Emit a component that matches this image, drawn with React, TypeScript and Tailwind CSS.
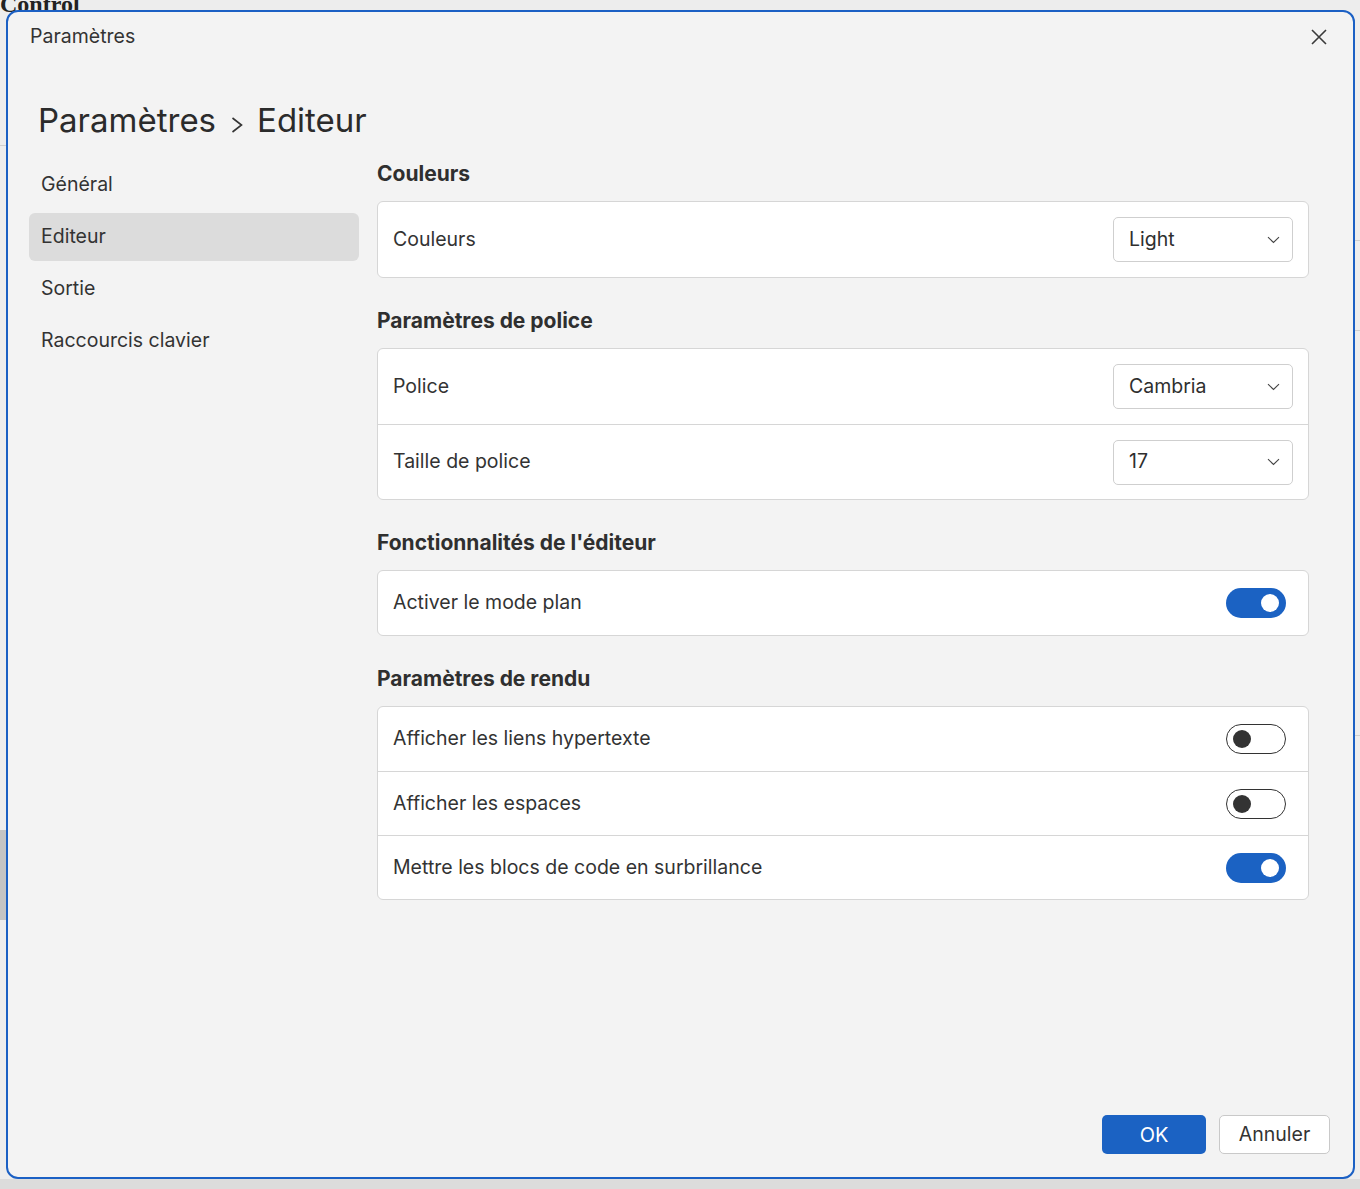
import React, { useState } from "react";

type Row =
  | { kind: "select"; label: string; value: string }
  | { kind: "toggle"; label: string; on: boolean };

interface Section {
  title: string;
  rows: Row[];
}

const sections: Section[] = [
  { title: "Couleurs", rows: [{ kind: "select", label: "Couleurs", value: "Light" }] },
  {
    title: "Paramètres de police",
    rows: [
      { kind: "select", label: "Police", value: "Cambria" },
      { kind: "select", label: "Taille de police", value: "17" },
    ],
  },
  {
    title: "Fonctionnalités de l'éditeur",
    rows: [{ kind: "toggle", label: "Activer le mode plan", on: true }],
  },
  {
    title: "Paramètres de rendu",
    rows: [
      { kind: "toggle", label: "Afficher les liens hypertexte", on: false },
      { kind: "toggle", label: "Afficher les espaces", on: false },
      { kind: "toggle", label: "Mettre les blocs de code en surbrillance", on: true },
    ],
  },
];

const navItems = ["Général", "Editeur", "Sortie", "Raccourcis clavier"];

const Chevron = () => (
  <svg width="13" height="8" viewBox="0 0 13 8" fill="none">
    <path d="M1 1.2l5.5 5.3L12 1.2" stroke="#444" strokeWidth="1.1" />
  </svg>
);

const SelectBox: React.FC<{ value: string }> = ({ value }) => (
  <div className="flex h-[45px] w-[180px] items-center justify-between rounded-[5px] border border-[#cfcfcf] bg-white pl-[15px] pr-[12px] text-[19.5px] text-[#2f2f2f]">
    <span>{value}</span>
    <Chevron />
  </div>
);

const Toggle: React.FC<{ on: boolean }> = ({ on }) =>
  on ? (
    <div className="flex h-[30px] w-[60px] items-center justify-end rounded-full bg-[#1b62c3] pr-[7px]">
      <div className="h-[18px] w-[18px] rounded-full bg-white" />
    </div>
  ) : (
    <div className="flex h-[30px] w-[60px] items-center rounded-full border border-[#333] bg-white pl-[6px]">
      <div className="h-[18px] w-[18px] rounded-full bg-[#333]" />
    </div>
  );

export default function App() {
  const [active, setActive] = useState(1);

  return (
    <div
      className="relative h-[1189px] w-[1360px] overflow-hidden bg-[#ededed] text-[#2f2f2f]"
      style={{ fontFamily: "Inter, 'Noto Sans', sans-serif" }}
    >
      {/* app behind the dialog */}
      <div
        className="absolute left-0 top-[-10px] text-[24px] font-bold leading-[28px] text-[#222]"
        style={{ fontFamily: "'Liberation Serif', serif" }}
      >
        Control
      </div>
      <div className="absolute left-0 top-[145px] h-px w-[6px] bg-[#cfcfcf]" />
      <div className="absolute left-0 top-[830px] h-[90px] w-[6px] bg-[#c4c4c4]" />
      <div className="absolute right-0 top-[240px] h-px w-[6px] bg-[#cfcfcf]" />
      <div className="absolute right-0 top-[330px] h-px w-[6px] bg-[#cfcfcf]" />
      <div className="absolute right-0 top-[735px] h-px w-[6px] bg-[#cfcfcf]" />
      <div className="absolute left-0 bottom-0 h-[10px] w-full bg-[#dcdcdc]" />

      {/* dialog */}
      <div className="absolute left-[6px] top-[10px] flex h-[1169px] w-[1349px] flex-col rounded-[12px] border-2 border-[#1b60c4] bg-[#f3f3f3]">
        <div className="flex h-[50px] items-center justify-between pl-[22px] pr-[26px]">
          <span className="text-[19.5px] text-[#333]">Paramètres</span>
          <svg width="16" height="16" viewBox="0 0 16 16" fill="none">
            <path d="M1 1l14 14M15 1L1 15" stroke="#3a3a3a" strokeWidth="1.6" />
          </svg>
        </div>

        <div className="mt-[38px] flex h-[40px] items-center pl-[30px] text-[33px] leading-[40px] text-[#2b2b2b]">
          <span>Paramètres</span>
          <svg className="ml-[15px] mr-[14px] mt-[10px]" width="12" height="16" viewBox="0 0 12 16" fill="none">
            <path d="M1.5 1l9 7-9 7" stroke="#333" strokeWidth="1.6" />
          </svg>
          <span>Editeur</span>
        </div>

        <div className="mt-[20px] flex pl-[21px] pr-[44px]">
          <nav className="mt-[1px] flex w-[330px] flex-col gap-[4px]">
            {navItems.map((item, i) => (
              <div
                key={item}
                onClick={() => setActive(i)}
                className={`flex h-[48px] cursor-pointer items-center rounded-[6px] px-[12px] text-[19.5px] text-[#333] ${
                  active === i ? "bg-[#dcdcdc]" : ""
                }`}
              >
                {item}
              </div>
            ))}
          </nav>

          <div className="ml-[18px] flex flex-1 flex-col gap-[29px]">
            {sections.map((section) => (
              <section key={section.title} className="flex flex-col gap-[13px]">
                <h2 className="text-[21px] font-bold leading-[28px] text-[#2f2f2f]">
                  {section.title}
                </h2>
                <div className="rounded-[6px] border border-[#d6d6d6] bg-white">
                  {section.rows.map((row, i) => (
                    <div
                      key={row.label}
                      className={`flex items-center justify-between pl-[15px] text-[19.5px] text-[#333] ${
                        row.kind === "select" ? "h-[75px] pr-[15px]" : "h-[64px] pr-[22px]"
                      } ${i > 0 ? "border-t border-[#d6d6d6]" : ""}`}
                    >
                      <span>{row.label}</span>
                      {row.kind === "select" ? <SelectBox value={row.value} /> : <Toggle on={row.on} />}
                    </div>
                  ))}
                </div>
              </section>
            ))}
          </div>
        </div>

        <div className="flex-1" />

        <div className="flex justify-end gap-[13px] pb-[23px] pr-[23px]">
          <button className="h-[39px] w-[104px] rounded-[5px] bg-[#1b62c3] text-[20px] text-white">OK</button>
          <button className="h-[39px] w-[111px] rounded-[5px] border border-[#c9c9c9] bg-white text-[19.5px] text-[#333]">
            Annuler
          </button>
        </div>
      </div>
    </div>
  );
}
